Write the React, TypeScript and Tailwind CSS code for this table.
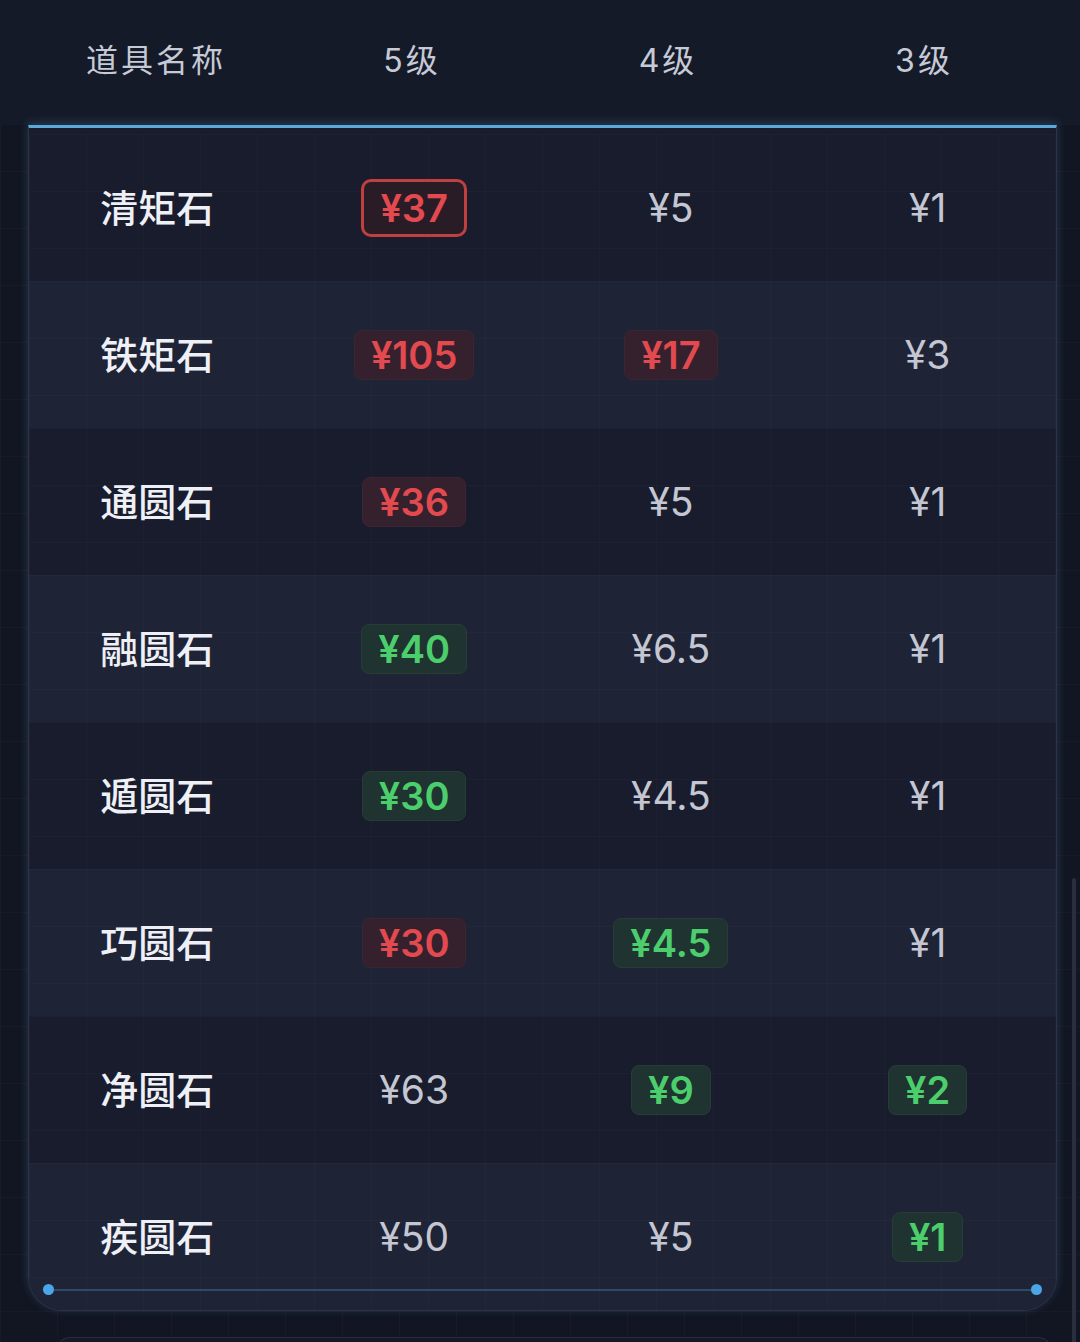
import React from "react";

type Cell = { v: string; t?: "r" | "g" | "rb" };

const rows: { name: string; cells: Cell[] }[] = [
  { name: "清矩石", cells: [{ v: "¥37", t: "rb" }, { v: "¥5" }, { v: "¥1" }] },
  { name: "铁矩石", cells: [{ v: "¥105", t: "r" }, { v: "¥17", t: "r" }, { v: "¥3" }] },
  { name: "通圆石", cells: [{ v: "¥36", t: "r" }, { v: "¥5" }, { v: "¥1" }] },
  { name: "融圆石", cells: [{ v: "¥40", t: "g" }, { v: "¥6.5" }, { v: "¥1" }] },
  { name: "遁圆石", cells: [{ v: "¥30", t: "g" }, { v: "¥4.5" }, { v: "¥1" }] },
  { name: "巧圆石", cells: [{ v: "¥30", t: "r" }, { v: "¥4.5", t: "g" }, { v: "¥1" }] },
  { name: "净圆石", cells: [{ v: "¥63" }, { v: "¥9", t: "g" }, { v: "¥2", t: "g" }] },
  { name: "疾圆石", cells: [{ v: "¥50" }, { v: "¥5" }, { v: "¥1", t: "g" }] },
];

const font = { fontFamily: '"Inter", "Noto Sans CJK SC", sans-serif' };

function Price({ c }: { c: Cell }) {
  if (!c.t)
    return <span className="text-[39px] leading-none text-[#c4c7d2] font-normal">{c.v}</span>;
  if (c.t === "rb")
    return (
      <span className="inline-flex h-[58px] items-center rounded-[10px] border-[3px] border-[#c0403f] bg-[#2a1c26] px-[16px] text-[38px] font-semibold leading-none text-[#e34a4f]">
        {c.v}
      </span>
    );
  if (c.t === "r")
    return (
      <span className="inline-flex h-[50px] items-center rounded-[8px] border border-[#3c2531] bg-[#34212d] px-[16px] text-[38px] font-semibold leading-none text-[#e34a4f]">
        {c.v}
      </span>
    );
  return (
    <span className="inline-flex h-[50px] items-center rounded-[8px] border border-[#263d36] bg-[#1f3430] px-[16px] text-[38px] font-semibold leading-none text-[#4cce6c]">
      {c.v}
    </span>
  );
}

export default function App() {
  return (
    <div
      className="relative flex h-[1342px] w-[1080px] flex-col overflow-hidden bg-[#121622] bg-[linear-gradient(rgba(255,255,255,0.022)_1px,transparent_1px),linear-gradient(90deg,rgba(255,255,255,0.022)_1px,transparent_1px)] bg-[size:57px_57px]"
      style={font}
    >
      {/* header */}
      <div className="grid h-[125px] shrink-0 grid-cols-4 items-center bg-[#151a29] px-[28px] pb-[4px]">
        {["道具名称", "5级", "4级", "3级"].map((h) => (
          <div key={h} className="text-center text-[32px] tracking-[3px] text-[#c6cad6]">
            {h}
          </div>
        ))}
      </div>

      {/* card */}
      <div className="relative mx-[28px] w-[1029px] shrink-0 overflow-hidden rounded-b-[34px] border-x border-b border-[#2d3348] border-t-[3px] border-t-[#5ea9dc] bg-[#181c2d] pt-[6px] shadow-[0_-2px_10px_rgba(94,169,220,0.25)]">
        {rows.map((r, i) => (
          <div
            key={r.name}
            className={`grid h-[147px] grid-cols-4 items-center bg-[linear-gradient(rgba(255,255,255,0.018)_1px,transparent_1px),linear-gradient(90deg,rgba(255,255,255,0.018)_1px,transparent_1px)] bg-[size:57px_57px] ${
              i % 2 === 1 ? "bg-[#1f2336]" : "bg-[#181c2d]"
            }`}
          >
            <div className="text-center text-[38px] font-medium leading-none text-[#eef0f6]">{r.name}</div>
            {r.cells.map((c, j) => (
              <div key={j} className="flex justify-center">
                <Price c={c} />
              </div>
            ))}
          </div>
        ))}
        {/* bottom glow line with end dots (overlay) */}
        <div className="absolute inset-x-[14px] bottom-[15px] flex items-center">
          <span className="h-[11px] w-[11px] shrink-0 rounded-full bg-[#4aa6e6]" />
          <span className="h-[2px] flex-1 bg-[#2f4a68]" />
          <span className="h-[11px] w-[11px] shrink-0 rounded-full bg-[#4aa6e6]" />
        </div>
      </div>

      {/* next card edge */}
      <div className="ml-[56px] mr-[28px] mt-[26px] h-[20px] shrink-0 rounded-t-[14px] border-x border-t border-[#262b3e] bg-[#161a28]" />

      {/* scrollbar overlay */}
      <div className="absolute right-[4px] top-[878px] h-[470px] w-[4px] rounded-full bg-[#2a2f40]" />
    </div>
  );
}
